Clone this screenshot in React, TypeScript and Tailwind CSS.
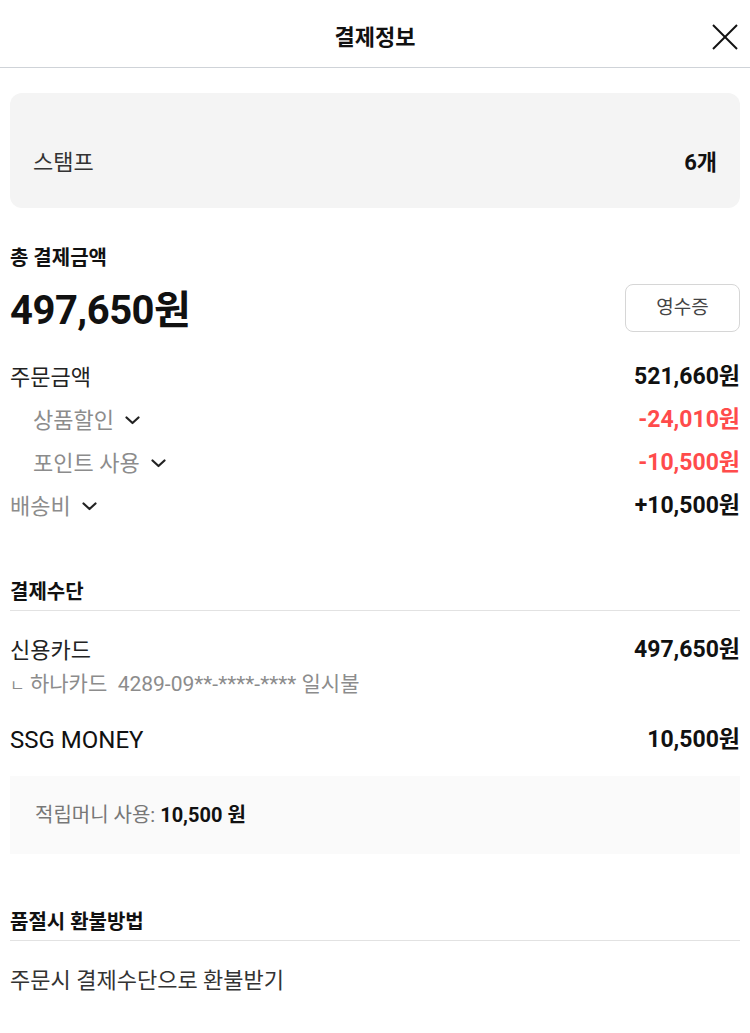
const font = { fontFamily: 'Roboto, "Noto Sans CJK KR", sans-serif' };

const Chevron = () => (
  <svg width="15" height="9" viewBox="0 0 15 9" fill="none" className="shrink-0">
    <polyline points="1.5,1.5 7.5,7 13.5,1.5" stroke="#222" strokeWidth="2.2" strokeLinecap="round" strokeLinejoin="round" />
  </svg>
);

const Row = ({
  label,
  value,
  indent = false,
  muted = false,
  red = false,
  toggle = false,
}: {
  label: string;
  value: string;
  indent?: boolean;
  muted?: boolean;
  red?: boolean;
  toggle?: boolean;
}) => (
  <div className={`flex items-center justify-between h-[43px] ${indent ? "pl-[23px]" : ""}`}>
    <div className={`flex items-center gap-[11px] text-[22px] ${muted ? "text-[#8c8c8c]" : "text-[#222]"}`}>
      <span>{label}</span>
      {toggle && <Chevron />}
    </div>
    <span className={`text-[23px] font-bold ${red ? "text-[#ff4b4b]" : "text-[#111]"}`}>{value}</span>
  </div>
);

export default function App() {
  return (
    <div className="w-[750px] bg-white" style={font}>
      {/* header */}
      <div className="relative flex items-center justify-center h-[68px] pt-[8px] border-b border-[#cfd3d8]">
        <span className="text-[22px] font-bold text-[#111]">결제정보</span>
        <svg width="26" height="26" viewBox="0 0 26 26" className="absolute right-[12px] top-[24px]">
          <line x1="1" y1="1" x2="25" y2="25" stroke="#111" strokeWidth="2" />
          <line x1="25" y1="1" x2="1" y2="25" stroke="#111" strokeWidth="2" />
        </svg>
      </div>

      <div className="px-[10px]">
        {/* stamp box */}
        <div className="mt-[25px] flex items-center justify-between h-[115px] pt-[24px] rounded-[12px] bg-[#f4f4f4] px-[23px]">
          <span className="text-[22px] text-[#333]">스탬프</span>
          <span className="text-[22px] font-bold text-[#111]">6개</span>
        </div>

        {/* total */}
        <div className="mt-[38px] h-[24px] leading-[24px] text-[20px] font-bold text-[#111]">총 결제금액</div>
        <div className="mt-[14px] flex items-center justify-between h-[48px]">
          <span className="text-[40px] font-bold tracking-[-0.5px] text-[#111] pt-[5px]">497,650원</span>
          <button className="w-[115px] h-[48px] rounded-[8px] border border-[#d6d6d6] text-[19px] text-[#444]">
            영수증
          </button>
        </div>

        <div className="mt-[24px]">
          <Row label="주문금액" value="521,660원" />
          <Row label="상품할인" value="-24,010원" indent muted red toggle />
          <Row label="포인트 사용" value="-10,500원" indent muted red toggle />
          <Row label="배송비" value="+10,500원" muted toggle />
        </div>

        {/* payment method */}
        <div className="mt-[52px] h-[31px] leading-[24px] border-b border-[#e2e2e2] text-[20px] font-bold text-[#111]">
          결제수단
        </div>
        <div className="mt-[24px] h-[30px] flex items-center justify-between">
          <span className="text-[22px] text-[#222]">신용카드</span>
          <span className="text-[23px] font-bold text-[#111]">497,650원</span>
        </div>
        <div className="mt-[7px] h-[24px] leading-[24px] text-[21px] text-[#8c8c8c] whitespace-pre">
          <span className="text-[16px]">ㄴ</span> 하나카드  4289-09**-****-**** 일시불
        </div>
        <div className="mt-[29px] h-[30px] flex items-center justify-between">
          <span className="text-[24px] text-[#111]">SSG MONEY</span>
          <span className="text-[23px] font-bold text-[#111]">10,500원</span>
        </div>
        <div className="mt-[21px] flex items-center h-[78px] bg-[#fafafa] px-[25px] text-[20px]">
          <span className="text-[#777]">적립머니 사용:&nbsp;</span>
          <span className="font-bold text-[#111]">10,500 원</span>
        </div>

        {/* refund */}
        <div className="mt-[56px] h-[31px] leading-[24px] border-b border-[#e2e2e2] text-[20px] font-bold text-[#111]">
          품절시 환불방법
        </div>
        <div className="mt-[25px] h-[30px] leading-[30px] text-[22px] text-[#333]">주문시 결제수단으로 환불받기</div>
      </div>
    </div>
  );
}
